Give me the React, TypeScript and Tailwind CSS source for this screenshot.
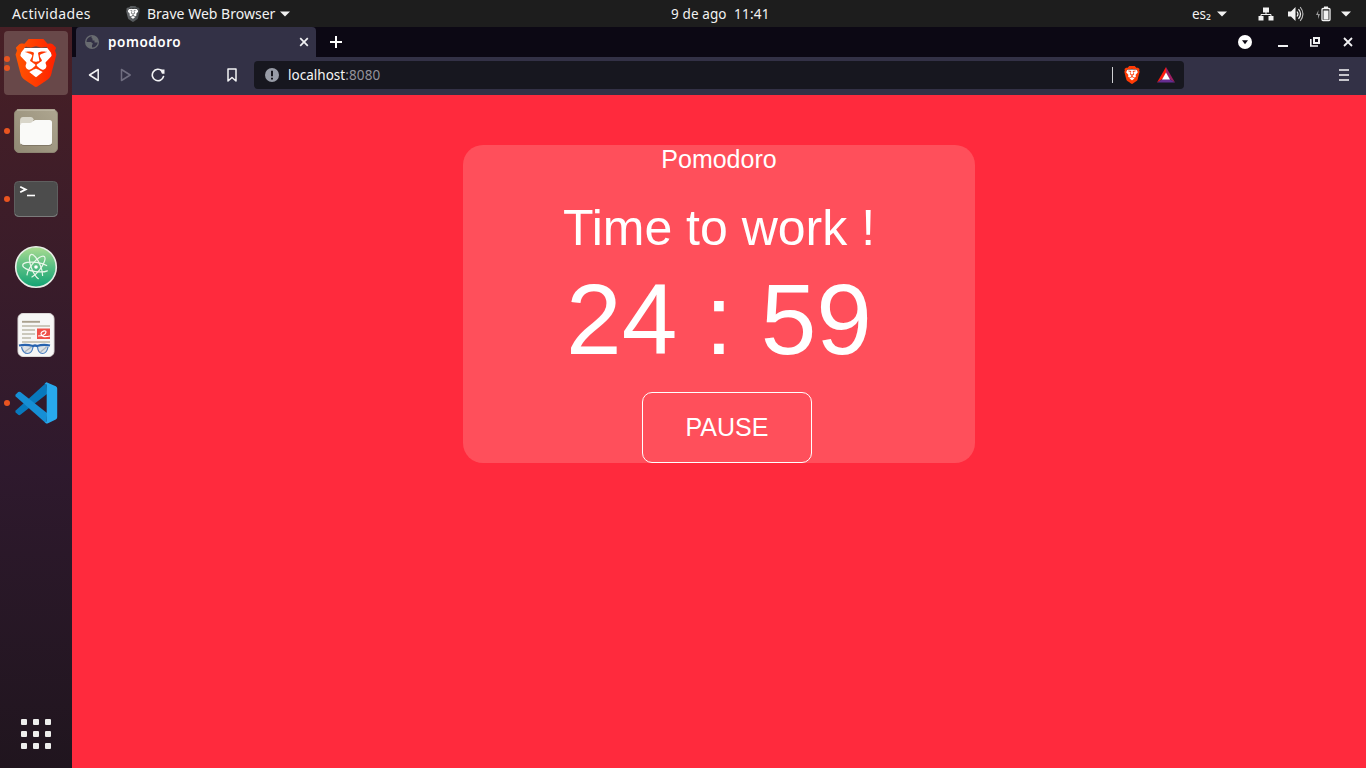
import React from "react";
import { SiBrave } from "react-icons/si";

function Caret() {
  return (
    <svg width="10" height="6" viewBox="0 0 10 6" className="shrink-0">
      <path d="M0 0.500h10L5 5.500z" fill="#f2f2f2" />
    </svg>
  );
}

function BraveLion({ size, id, from, to, face }: { size: number; id: string; from: string; to: string; face: string }) {
  return (
    <svg width={size} height={size} viewBox="0 0 24 24" className="shrink-0">
      <defs>
        <linearGradient id={id} x1="0" x2="1" y1="0" y2="0">
          <stop offset="0" stopColor={from} />
          <stop offset="1" stopColor={to} />
        </linearGradient>
      </defs>
      <path d="M5 4.500h14l1 4-3 9-5 4-5-4-3-9z" fill={face} />
      <SiBrave size={24} style={{ fill: `url(#${id})` }} />
    </svg>
  );
}

function FilesIcon() {
  return (
    <svg width="46" height="46" viewBox="0 0 46 46">
      <defs>
        <linearGradient id="files" x1="0" x2="1" y1="1" y2="0">
          <stop offset="0" stopColor="#918974" />
          <stop offset="1" stopColor="#aea690" />
        </linearGradient>
      </defs>
      <rect x="1.500" y="1.500" width="43" height="43" rx="4.500" fill="url(#files)" stroke="#8d8572" />
      <path d="M4 2h38" stroke="#c8c1af" />
      <path d="M7 13q0-4 3-4h8q2 0 3 3h-1v4H7z" fill="#d9d6ca" />
      <path d="M9.500 15h7.500c2.500 0 3-3 5.500-3H36.500q2.500 0 2.500 2.500V34q0 3-3 3h-26q-3 0-3-3V17q0-2 2.500-2z" fill="#fafaf8" />
      <path d="M8 36q1 1.500 3 1.500h25q2 0 3-1.500" fill="none" stroke="#746c5b" strokeWidth=".7" />
    </svg>
  );
}

function TerminalIcon() {
  return (
    <svg width="46" height="38" viewBox="0 0 46 38">
      <rect x="1.500" y="1.500" width="43" height="35" rx="4" fill="#4c4c4c" stroke="#5f5f5f" />
      <path d="M2 34q1 2.500 4 2.500h34q3 0 4-2.500" fill="none" stroke="#7b7b7b" />
      <path d="M7.200 6.700l5.500 2.700-5.500 2.800" fill="none" stroke="#fff" strokeWidth="1.800" />
      <path d="M14 15.500h8" stroke="#fff" strokeWidth="1.600" />
    </svg>
  );
}

function AtomIcon() {
  return (
    <svg width="44" height="44" viewBox="0 0 44 44">
      <defs>
        <linearGradient id="atom" x1="0" x2="0" y1="0" y2="1">
          <stop offset="0" stopColor="#abdc91" />
          <stop offset=".5" stopColor="#57be83" />
          <stop offset="1" stopColor="#12a374" />
        </linearGradient>
      </defs>
      <circle cx="22" cy="22" r="20.300" fill="url(#atom)" stroke="#e8eee7" strokeWidth="1.600" />
      <g fill="none" stroke="#e8f7e9" strokeWidth="1.200" strokeLinecap="round">
        <ellipse cx="22" cy="22" rx="13.400" ry="4.600" transform="rotate(8 22 22)" strokeDasharray="52 9" strokeDashoffset="-3" />
        <ellipse cx="22" cy="22" rx="13.400" ry="4.600" transform="rotate(68 22 22)" strokeDasharray="52 9" strokeDashoffset="-3" />
        <ellipse cx="22" cy="22" rx="13.400" ry="4.600" transform="rotate(128 22 22)" strokeDasharray="52 9" strokeDashoffset="-3" />
      </g>
      <circle cx="22" cy="22" r="1.800" fill="#fff" />
    </svg>
  );
}

function DocumentIcon() {
  return (
    <svg width="40" height="46" viewBox="0 0 40 46">
      <rect x="2" y="1.500" width="36" height="43" rx="5" fill="#f7f7f6" stroke="#dcd9d8" />
      <path d="M6 9.800h18" stroke="#aaa18f" strokeWidth="1.900" />
      <path d="M6 14h28M6 18h13M6 22h13M6 26h9M6 30h28" stroke="#cbc8bc" strokeWidth="1.900" />
      <rect x="21" y="16.500" width="13" height="10.500" fill="#ef5048" />
      <path d="M22 24c4 0 8-1.500 8-4 0-2-5-1-5 1.500 0 3 3 4 9 2.500" fill="none" stroke="#fff" strokeWidth="1.200" />
      <path d="M5 34.500q5-2 12 0-.2 7-5 7-5 0-7-7zM21 34.500q6-2 11.500 0-1.500 7-6 7-5 0-5.500-7z" fill="#dde1e5" />
      <path d="M5.500 35q1.500 6.500 6 6.500 4.500 0 5.500-6.500M21.500 35q.8 6.500 5 6.500 4.200 0 5.500-6.500" fill="none" stroke="#4a7fc0" strokeWidth="1.200" />
      <path d="M3 33.500q7-1.500 14 .5 2-1 4 0 6-2 13-.5" fill="none" stroke="#2762ae" strokeWidth="2.300" />
      <path d="M8.500 40l7-5M24.500 40l6-5" stroke="#aab3bc" strokeWidth="1.200" />
    </svg>
  );
}

function CodeIcon() {
  return (
    <svg width="44" height="44" viewBox="0 0 44 44">
      <path d="M32.500 1.600L1.700 29.400q-.8 1 0 2l2.500 2.300q1 .8 2.200.1L33 13z" fill="#0879bd" />
      <path d="M6.400 11.100q-1.200-.8-2.200 0l-2.500 2.300q-.8 1 0 2l30.800 27.400L33 32z" fill="#168fd5" />
      <path d="M32.500 1.300q-1.400.4-2 1.700 1.700-1.100 2.200 1.100v36q-.4 2-2.200 1 1 1.700 3 1.400l8.300-4q1.400-.7 1.400-2.200V7.500q0-1.500-1.400-2.200z" fill="#28a9ed" />
    </svg>
  );
}

function Launcher({ dots, active, children }: { dots: number; active?: boolean; children: React.ReactNode }) {
  return (
    <div className="relative flex h-[68px] w-[72px] items-center justify-center">
      <div className={active ? "flex h-16 w-16 items-center justify-center rounded bg-[#684849]" : "flex h-16 w-16 items-center justify-center"}>
        {children}
      </div>
      <div className="absolute left-1 top-0 flex h-full flex-col justify-center gap-[3px]">
        {Array.from({ length: dots }, (_, i) => (
          <span key={i} className="h-1.5 w-1.5 rounded-full bg-[#e95420]" />
        ))}
      </div>
    </div>
  );
}

function TopBar() {
  return (
    <header className="grid h-[27px] shrink-0 grid-cols-[1fr_auto_1fr] items-center bg-[#1d1d1d] text-[14px] leading-[26px] text-[#f2f2f2]">
      <div className="flex items-center pl-3">
        <span className="w-[113px] tracking-[0.370px]">Actividades</span>
        <BraveLion size={16} id="topLion" from="#66696c" to="#45494c" face="#ffffff" />
        <span className="ml-[6px] w-[128px] whitespace-nowrap text-[14px] tracking-[0.010px]">Brave Web Browser</span>
        <span className="ml-[5px]"><Caret /></span>
      </div>
      <div className="flex gap-[7px] pl-[76px] text-[13.500px]">
        <span className="w-[56px] whitespace-nowrap tracking-[0.120px]">9 de ago</span>
        <span className="w-[37px] whitespace-nowrap tracking-[0.250px]">11:41</span>
      </div>
      <div className="flex items-center justify-end pr-[15px]">
        <span className="flex w-[25px] text-[13.500px]">es<span className="relative -top-px text-[14px]">₂</span></span>
        <Caret />
        <svg width="16" height="14" viewBox="0 0 16 14" className="ml-[31px]">
          <path d="M5 0.500h6v5H5zM0.500 9h5v4.500h-5zM10.500 9h5v4.500h-5z" fill="#f2f2f2" />
          <path d="M8 5v2.500M3 9V7.500h10V9" fill="none" stroke="#f2f2f2" />
        </svg>
        <svg width="16" height="16" viewBox="0 0 16 16" className="ml-3.5">
          <path d="M0 5.500h3L7.500 1v14L3 10.500H0z" fill="#f2f2f2" />
          <path d="M9 5.500q2 2.500 0 5M10.500 3.200q4 4.800 0 9.600" fill="none" stroke="#f2f2f2" strokeWidth="1.200" />
          <path d="M12.200 1q5.500 7 0 14" fill="none" stroke="#bbb" strokeWidth="1.100" />
        </svg>
        <svg width="17" height="16" viewBox="0 0 17 16" className="ml-[11px]">
          <path d="M3.500 4L1 9h2v4l2-5H3z" fill="#999" />
          <path d="M8 2.500h6q1 0 1 1v10q0 1-1 1H8q-1 0-1-1v-10q0-1 1-1z" fill="none" stroke="#f2f2f2" strokeWidth="1.300" />
          <path d="M9 0.500h4V3H9zM8.500 4.500h5v9h-5z" fill="#f2f2f2" />
        </svg>
        <span className="ml-[9px]"><Caret /></span>
      </div>
    </header>
  );
}

function Dock() {
  return (
    <nav className="flex w-[72px] shrink-0 flex-col bg-linear-to-b from-[#481f25] via-[#2e192d] via-60% to-[#20151e] pt-[2px]">
      <Launcher dots={2} active>
        <BraveLion size={48} id="dockLion" from="#ff5601" to="#ff2000" face="#ffffff" />
      </Launcher>
      <Launcher dots={1}><FilesIcon /></Launcher>
      <Launcher dots={1}><TerminalIcon /></Launcher>
      <Launcher dots={0}><AtomIcon /></Launcher>
      <Launcher dots={0}><DocumentIcon /></Launcher>
      <Launcher dots={1}><CodeIcon /></Launcher>
      <div className="mx-auto mb-[19px] mt-auto grid grid-cols-3 gap-1.5">
        {Array.from({ length: 9 }, (_, i) => (
          <span key={i} className="h-1.5 w-1.5 rounded-[1px] bg-[#eeeeec]" />
        ))}
      </div>
    </nav>
  );
}

function TabStrip() {
  return (
    <div className="flex h-[30px] shrink-0 items-center bg-[#0c0814] pl-1 pr-[13px]">
      <div className="flex h-full w-[240px] items-center rounded-t bg-[#333146] pl-[9px] pr-[7px]">
        <svg width="14" height="14" viewBox="0 0 14 14">
          <circle cx="7" cy="7" r="7" fill="#686b70" />
          <path d="M7 1.500c-1 1-.5 2 .5 2v2h2v2h3.300c-.5 3-2.800 5-5.800 5v-2.500l1-1.200-2-1.800H1.600C1.300 4 4 1.300 7 1.500z" fill="#333146" />
        </svg>
        <span className="ml-[9px] text-[13.500px] font-semibold tracking-[0.550px] text-white">pomodoro</span>
        <svg width="10" height="10" viewBox="0 0 10 10" className="ml-auto">
          <path d="M1.200 1.200l7.600 7.600M8.800 1.200L1.200 8.800" stroke="#f1f1f3" strokeWidth="1.700" />
        </svg>
      </div>
      <svg width="12" height="12" viewBox="0 0 12 12" className="ml-3.5">
        <path d="M6 0v12M0 6h12" stroke="#fff" strokeWidth="2" />
      </svg>
      <svg width="14" height="14" viewBox="0 0 14 14" className="ml-auto">
        <circle cx="7" cy="7" r="7" fill="#fff" />
        <path d="M4 5.200h6L7 9.200z" fill="#0c0814" />
      </svg>
      <svg width="10" height="10" viewBox="0 0 10 10" className="ml-[26px]">
        <path d="M0 9h10" stroke="#f1f1f3" strokeWidth="2" />
      </svg>
      <svg width="10" height="10" viewBox="0 0 10 10" className="ml-[22px]">
        <path d="M4 1h5v5H4z" fill="none" stroke="#f1f1f3" strokeWidth="2" />
        <path d="M.8 2v7H8" fill="none" stroke="#f1f1f3" strokeWidth="1.600" />
      </svg>
      <svg width="10" height="10" viewBox="0 0 10 10" className="ml-[23px]">
        <path d="M1 1l8 8M9 1L1 9" stroke="#f1f1f3" strokeWidth="1.800" />
      </svg>
    </div>
  );
}

function Toolbar() {
  return (
    <div className="flex h-[38px] shrink-0 items-center bg-[#333146] pb-[2px] pl-4 pr-[17px]">
      <svg width="12" height="14" viewBox="0 0 12 14">
        <path d="M10.200 1.500v11L1.500 7z" fill="none" stroke="#f3f3f5" strokeWidth="1.500" strokeLinejoin="round" />
      </svg>
      <svg width="12" height="14" viewBox="0 0 12 14" className="ml-5">
        <path d="M1.500 1.500v11L10.200 7z" fill="none" stroke="#706e80" strokeWidth="1.500" strokeLinejoin="round" />
      </svg>
      <svg width="14" height="14" viewBox="0 0 14 14" className="ml-[19px]">
        <path d="M12.500 8.500a5.700 5.700 0 1 1-1.500-5.600" fill="none" stroke="#f3f3f5" strokeWidth="1.600" strokeLinecap="round" />
        <path d="M9 1.500h4.500v4.300H11z" fill="#f3f3f5" />
      </svg>
      <svg width="12" height="14" viewBox="0 0 12 14" className="ml-[61px]">
        <path d="M2 1h8v12L6 9.500 2 13z" fill="none" stroke="#f3f3f5" strokeWidth="1.500" strokeLinejoin="round" />
      </svg>
      <div className="ml-4 flex h-7 w-[930px] items-center rounded bg-[#17171f] pl-[11px] pr-[9px]">
        <svg width="14" height="14" viewBox="0 0 14 14">
          <circle cx="7" cy="7" r="7" fill="#989ca7" />
          <path d="M7 2.800v5.400M7 9.700v1.700" stroke="#17171f" strokeWidth="2" />
        </svg>
        <span className="ml-[9px] text-[13.500px] tracking-[0.020px] text-[#f5f5f5]">localhost<span className="tracking-[0.120px] text-[#93929b]">:8080</span></span>
        <span className="ml-auto h-4 w-px bg-[#d0d0d3]" />
        <span className="ml-[10px]"><BraveLion size={18} id="shieldLion" from="#ff3b05" to="#ff3b05" face="#ffffff" /></span>
        <svg width="18" height="16" viewBox="0 0 18 16" className="ml-4">
          <path d="M9 0v6L5.500 12 0 15.500z" fill="#ff1b0e" />
          <path d="M9 0v6l3.500 6 5.500 3.500z" fill="#9e1f63" />
          <path d="M5.500 12h7l5.500 3.500H0z" fill="#662d91" />
          <path d="M9 5.500l4 7H5z" fill="#fff" />
        </svg>
      </div>
      <svg width="10" height="12" viewBox="0 0 10 12" className="ml-auto">
        <path d="M0 1h10M0 6h10M0 11h10" stroke="#c6c5cc" strokeWidth="1.800" />
      </svg>
    </div>
  );
}

function PomodoroPage() {
  return (
    <main className="flex grow justify-center bg-[#ff2a3d] pt-[50px] [font-family:'Liberation_Sans',Arial,sans-serif] text-white">
      <section className="flex h-[318px] w-[512px] flex-col items-center rounded-[20px] bg-[#ff4f5b]">
        <h1 className="h-[29px] text-[25px] leading-[29px]">Pomodoro</h1>
        <p className="mt-[26px] text-[50px] leading-[57px]">Time to work !</p>
        <div className="mt-[5px] whitespace-nowrap text-[100px] leading-[115px]">24 : 59</div>
        <button className="ml-4 mt-auto h-[71px] w-[170px] rounded-[10px] border border-white text-[25px]">PAUSE</button>
      </section>
    </main>
  );
}

export default function App() {
  return (
    <div className="flex h-screen w-screen flex-col overflow-hidden [font-family:'Noto_Sans',sans-serif]">
      <TopBar />
      <div className="flex min-h-0 grow">
        <Dock />
        <div className="flex min-w-0 grow flex-col">
          <TabStrip />
          <Toolbar />
          <PomodoroPage />
        </div>
      </div>
    </div>
  );
}
